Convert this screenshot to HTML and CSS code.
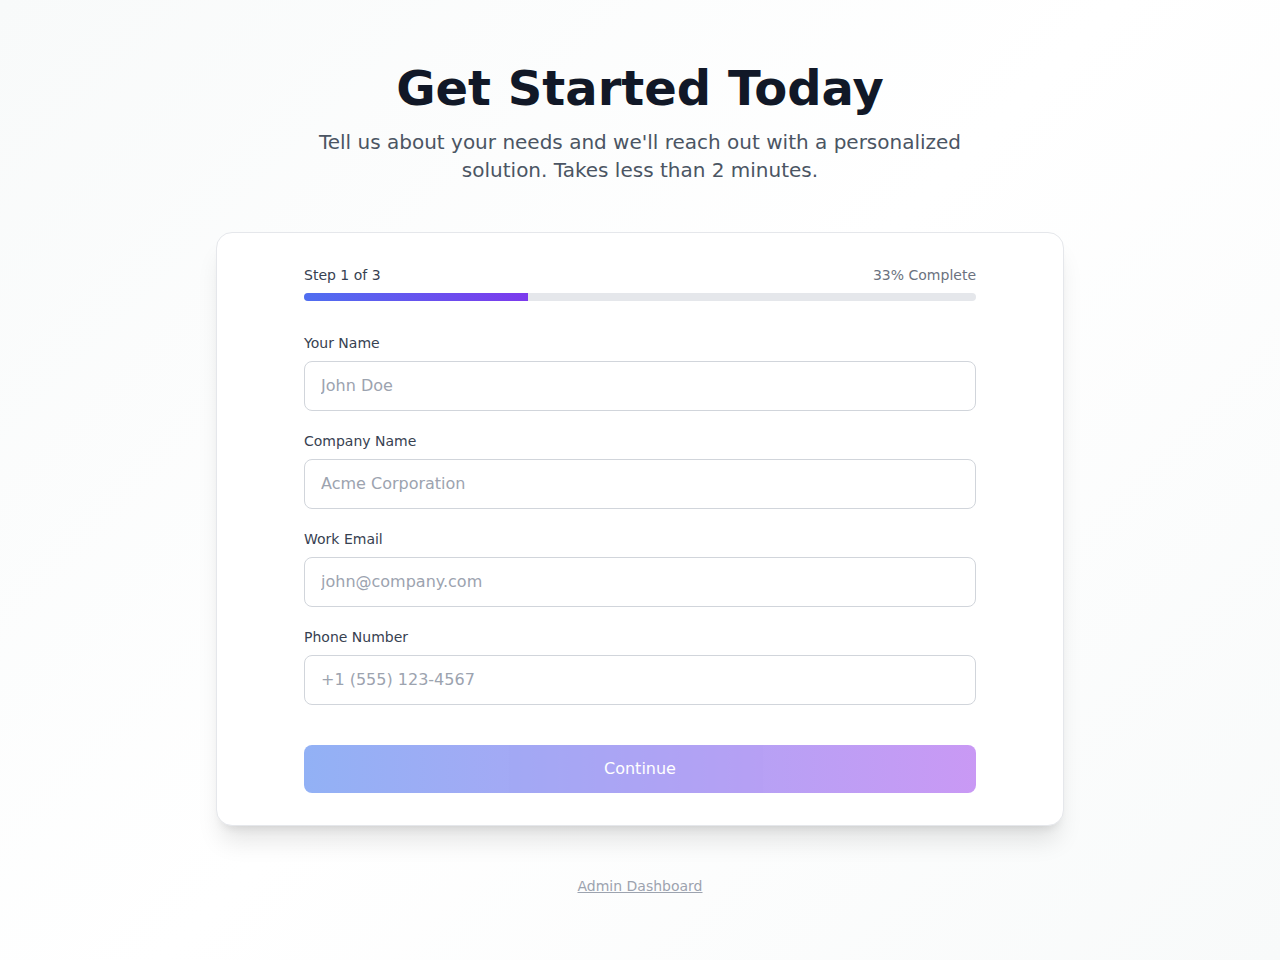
FILE: index.html
```html
<!DOCTYPE html>
<html lang="en">
<head>
    <meta charset="UTF-8">
    <meta name="viewport" content="width=device-width, initial-scale=1.0">
    <title>Get Started Today</title>
    <link rel="stylesheet" href="styles.css">
</head>
<body>

    <div class="page">
        <header class="hero">
            <h1>Get Started Today</h1>
            <p>Tell us about your needs and we'll reach out with a personalized solution. Takes less than 2 minutes.</p>
        </header>

        <div class="card">
            <div class="card-inner">
                <div class="progress-info">
                    <span class="step">Step 1 of 3</span>
                    <span class="percent">33% Complete</span>
                </div>
                <div class="progress-track">
                    <div class="progress-fill" style="width: 33.33%"></div>
                </div>

                <form class="form" action="#" method="POST">
                    <div class="field">
                        <label for="nome">Your Name</label>
                        <input type="text" id="nome" class="input-field" placeholder="John Doe">
                    </div>
                    <div class="field">
                        <label for="empresa">Company Name</label>
                        <input type="text" id="empresa" class="input-field" placeholder="Acme Corporation">
                    </div>
                    <div class="field">
                        <label for="email">Work Email</label>
                        <input type="email" id="email" class="input-field" placeholder="john@company.com">
                    </div>
                    <div class="field">
                        <label for="telefone">Phone Number</label>
                        <input type="tel" id="telefone" class="input-field" placeholder="+1 (555) 123-4567">
                    </div>

                    <button type="submit" class="btn" disabled>Continue</button>
                </form>
            </div>
        </div>

        <div class="footer">
            <a href="#">Admin Dashboard</a>
        </div>
    </div>

</body>
</html>
```

FILE: styles.css
```css
* {
    box-sizing: border-box;
}

html, body {
    height: 100%;
}

body {
    font-family: "DejaVu Sans", sans-serif;
    background: linear-gradient(135deg, #f8fafa 0%, #ffffff 50%, #f8fafa 100%);
    margin: 0;
    padding: 0;
    color: #111827;
}

.page {
    width: 848px;
    margin: 0 auto;
    padding-top: 64px;
}

.hero {
    text-align: center;
}

.hero h1 {
    font-size: 48px;
    line-height: 48px;
    font-weight: bold;
    color: #111827;
    margin: 0 0 16px;
}

.hero p {
    max-width: 672px;
    margin: 0 auto;
    font-size: 20px;
    line-height: 28px;
    color: #4b5563;
}

.card {
    margin-top: 48px;
    padding: 32px;
    background-color: #ffffff;
    border: 1px solid #e5e7eb;
    border-radius: 16px;
    box-shadow: 0 20px 25px -5px rgba(0, 0, 0, 0.1), 0 8px 10px -6px rgba(0, 0, 0, 0.1);
}

.card-inner {
    max-width: 672px;
    margin: 0 auto;
}

.progress-info {
    display: flex;
    justify-content: space-between;
    font-size: 14px;
    line-height: 20px;
}

.step {
    color: #374151;
}

.percent {
    color: #6b7280;
}

.progress-track {
    margin-top: 8px;
    height: 8px;
    background-color: #e5e7eb;
    border-radius: 9999px;
    overflow: hidden;
}

.progress-fill {
    height: 100%;
    background: linear-gradient(90deg, #4f6ef0, #7c3aed);
}

.form {
    margin-top: 32px;
    display: flex;
    flex-direction: column;
    gap: 20px;
}

.field label {
    display: block;
    font-size: 14px;
    line-height: 20px;
    color: #374151;
    margin-bottom: 8px;
}

.input-field {
    display: block;
    width: 100%;
    padding: 12px 16px;
    border: 1px solid #d1d5db;
    border-radius: 8px;
    font-family: inherit;
    font-size: 16px;
    line-height: 24px;
    color: #111827;
    background-color: #ffffff;
}

.input-field::placeholder {
    color: #9ca3af;
}

.btn {
    margin-top: 20px;
    width: 100%;
    padding: 12px 16px;
    border: none;
    border-radius: 8px;
    background: linear-gradient(90deg, #2563eb, #9333ea);
    color: #ffffff;
    font-family: inherit;
    font-size: 16px;
    line-height: 24px;
    opacity: 0.5;
    cursor: not-allowed;
}

.footer {
    text-align: center;
    margin-top: 50px;
    font-size: 14px;
    line-height: 20px;
}

.footer a {
    color: #9ca3af;
    text-decoration: underline;
}
```
